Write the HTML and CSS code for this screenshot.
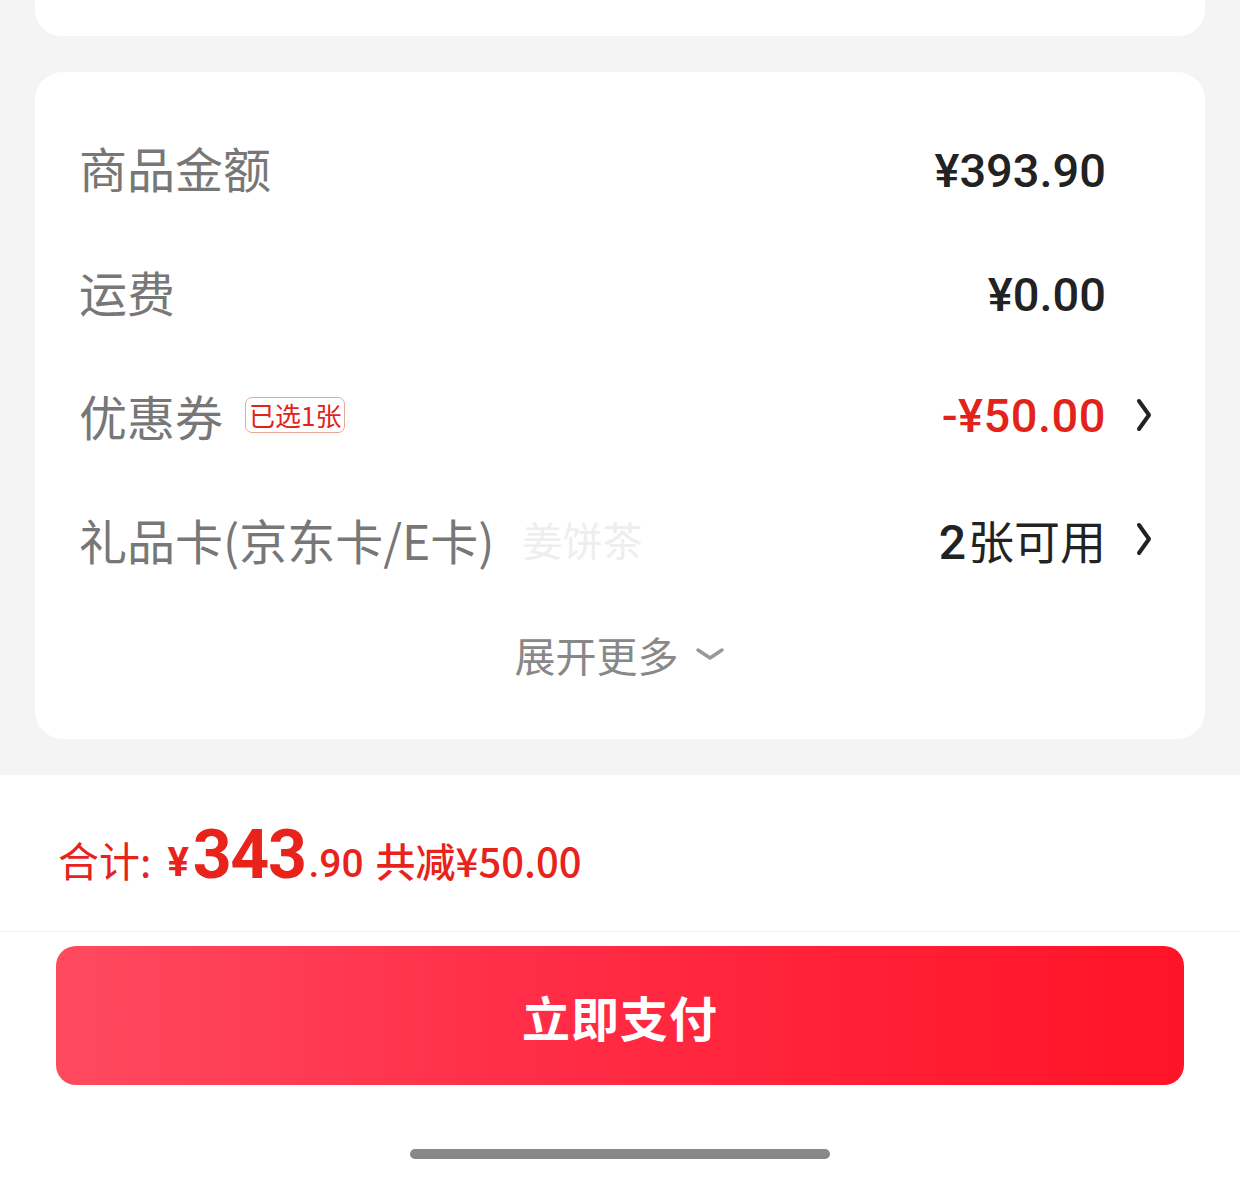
FILE: index.html
```html
<!DOCTYPE html>
<html lang="zh-CN">
<head>
    <meta charset="UTF-8">
    <meta name="viewport" content="width=device-width, initial-scale=1.0">
    <title>确认订单</title>
    <link rel="stylesheet" href="styles.css">
</head>
<body>
    <div class="page">
        <div class="card card-top"></div>

        <div class="card summary">
            <div class="row">
                <div class="label">商品金额</div>
                <div class="value">¥393.90</div>
                <div class="arrow-slot"></div>
            </div>
            <div class="row">
                <div class="label">运费</div>
                <div class="value">¥0.00</div>
                <div class="arrow-slot"></div>
            </div>
            <div class="row">
                <div class="label">优惠券 <span class="tag">已选1张</span></div>
                <div class="value value-red">-¥50.00</div>
                <div class="arrow-slot">
                    <svg class="arrow" viewBox="0 0 16 34" width="16" height="34">
                        <path d="M3 3 L13 17 L3 31" fill="none" stroke="#222" stroke-width="4" stroke-linecap="round" stroke-linejoin="round"/>
                    </svg>
                </div>
            </div>
            <div class="row">
                <div class="label">礼品卡(京东卡/E卡) <span class="hint">姜饼茶</span></div>
                <div class="value value-cn"><b class="num">2</b>张可用</div>
                <div class="arrow-slot">
                    <svg class="arrow" viewBox="0 0 16 34" width="16" height="34">
                        <path d="M3 3 L13 17 L3 31" fill="none" stroke="#222" stroke-width="4" stroke-linecap="round" stroke-linejoin="round"/>
                    </svg>
                </div>
            </div>
            <div class="more">
                <span>展开更多</span>
                <svg class="more-arrow" viewBox="0 0 30 14" width="30" height="14">
                    <path d="M3 3 L15 11 L27 3" fill="none" stroke="#999" stroke-width="3.5" stroke-linecap="round" stroke-linejoin="round"/>
                </svg>
            </div>
        </div>

        <div class="footer">
            <div class="total">
                <span class="total-label">合计:</span>
                <span class="total-yen">¥</span><span class="total-int">343</span><span class="total-dec">.90</span>
                <span class="total-save">共减¥50.00</span>
            </div>
            <div class="pay-wrap">
                <button class="pay-btn">立即支付</button>
            </div>
            <div class="home-bar"></div>
        </div>
    </div>
</body>
</html>
```

FILE: styles.css
```css
body {
    margin: 0;
    background-color: #f4f4f4;
    font-family: "Noto Sans CJK SC", "Noto Sans", sans-serif;
}
.page {
    width: 1240px;
    height: 1184px;
    display: flex;
    flex-direction: column;
    overflow: hidden;
}
.card {
    background: #fff;
    margin: 0 35px;
}
.card-top {
    height: 36px;
    border-radius: 0 0 26px 26px;
}
.summary {
    margin-top: 36px;
    height: 667px;
    box-sizing: border-box;
    padding: 33px 53px 0 44px;
    border-radius: 28px;
}
.row {
    height: 124px;
    display: flex;
    align-items: center;
}
.label {
    flex: 1;
    font-size: 48px;
    color: #777;
    display: flex;
    align-items: center;
    white-space: nowrap;
}
.tag {
    margin-left: 22px;
    font-size: 26px;
    color: #e2231a;
    border: 1px solid #eba595;
    border-radius: 7px;
    padding: 0 3px;
    height: 34px;
    line-height: 34px;
}
.hint {
    margin-left: 28px;
    font-size: 40px;
    color: #eeeeee;
}
.value {
    font-family: Roboto, "Noto Sans CJK SC", sans-serif;
    font-weight: 500;
    font-size: 47px;
    color: #222;
    margin-top: 6px;
}
.value-red {
    color: #e2231a;
    margin-top: 0;
    letter-spacing: 0.5px;
}
.value-cn {
    font-family: "Noto Sans CJK SC", sans-serif;
    font-weight: 400;
    font-size: 46px;
    margin-top: 0;
}
.num {
    font-family: Roboto, sans-serif;
    font-weight: 500;
    font-size: 48px;
    margin-right: 2px;
}
.arrow-slot {
    width: 46px;
    display: flex;
    justify-content: flex-end;
}
.more {
    height: 84px;
    box-sizing: border-box;
    padding: 22px 0 0 8px;
    display: flex;
    align-items: center;
    justify-content: center;
    gap: 16px;
    font-size: 41px;
    color: #888;
}
.footer {
    margin-top: 36px;
    flex: 1;
    background: #fff;
}
.total {
    height: 157px;
    box-sizing: border-box;
    padding: 12px 0 0 58px;
    border-bottom: 1px solid #f2f2f2;
    display: flex;
    align-items: center;
    color: #e8231b;
    white-space: pre;
}
.total-label {
    font-size: 41px;
    margin-right: 16px;
}
.total-yen {
    font-family: Roboto, sans-serif;
    font-weight: 700;
    font-size: 40px;
    margin-top: 6px;
    margin-right: 4px;
}
.total-int {
    font-family: Roboto, sans-serif;
    font-weight: 700;
    font-size: 68px;
    letter-spacing: -1.5px;
    margin-top: -8px;
}
.total-dec {
    font-family: Roboto, sans-serif;
    font-weight: 500;
    font-size: 39px;
    margin-top: 10px;
    margin-left: 3px;
}
.total-save {
    font-size: 40px;
    font-weight: 500;
    margin-left: 12px;
    margin-top: 2px;
}
.pay-wrap {
    padding: 14px 56px 0;
}
.pay-btn {
    width: 100%;
    height: 139px;
    border: none;
    border-radius: 20px;
    background: linear-gradient(90deg, #fe4a5f 0%, #ff2e48 40%, #ff1327 100%);
    color: #fff;
    font-family: "Noto Sans CJK SC", sans-serif;
    font-size: 48px;
    font-weight: 700;
    letter-spacing: 1px;
}
.home-bar {
    width: 420px;
    height: 10px;
    border-radius: 5px;
    background: #888;
    margin: 64px auto 0;
}
```
